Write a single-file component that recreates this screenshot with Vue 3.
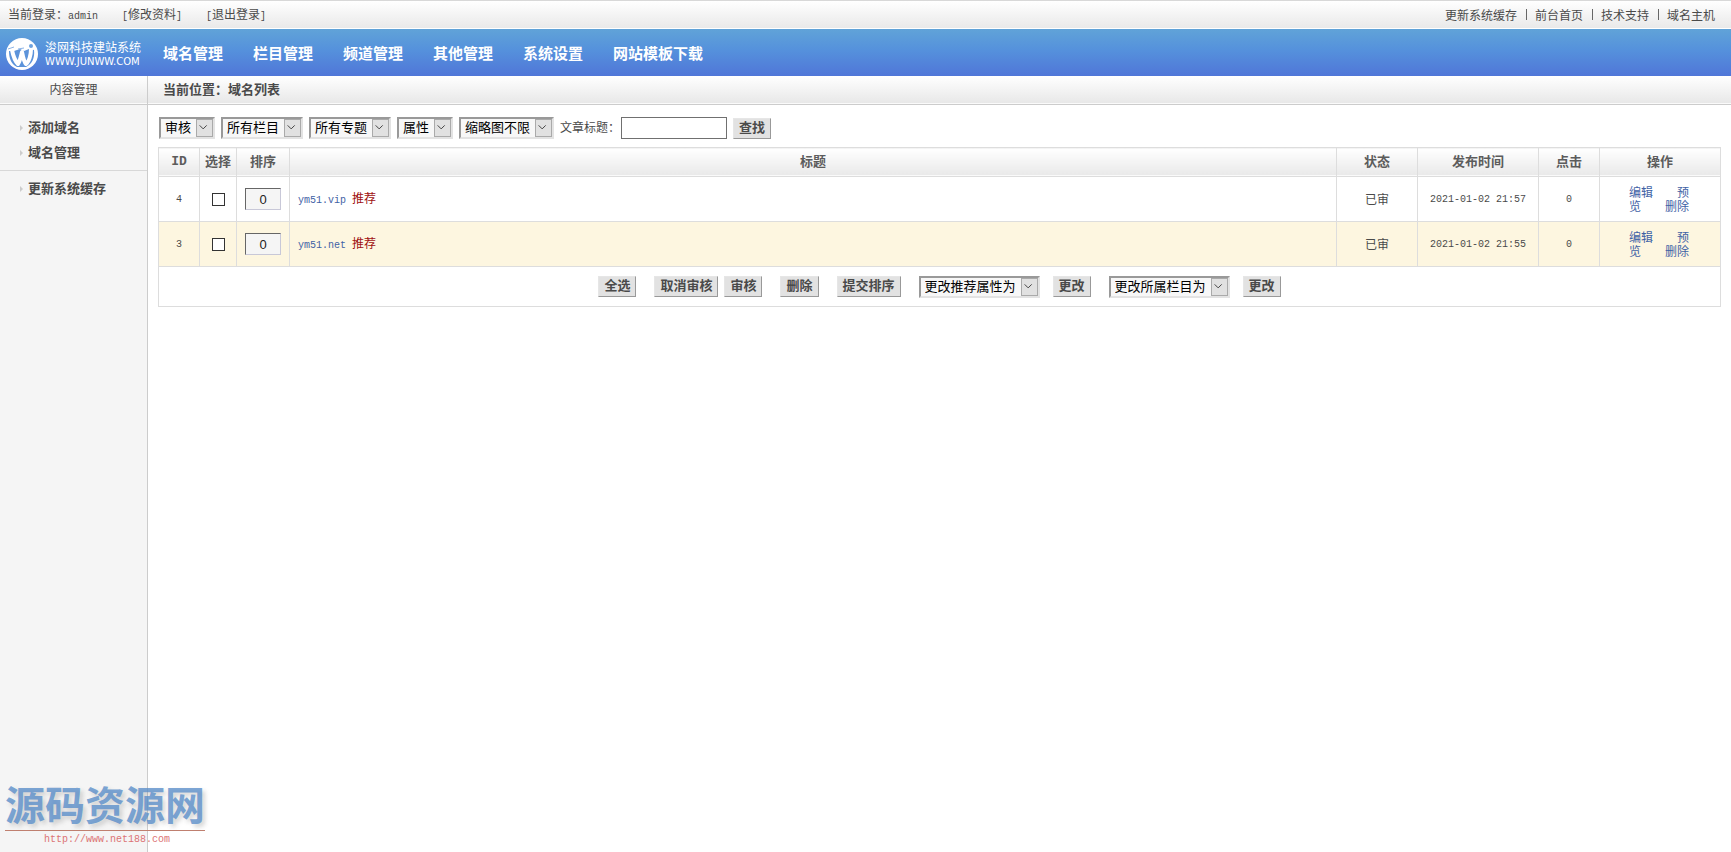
<script setup>
import { ref } from 'vue'

const navItems = ['域名管理', '栏目管理', '频道管理', '其他管理', '系统设置', '网站模板下载']
const quickLinks = ['更新系统缓存', '前台首页', '技术支持', '域名主机']
const filters = ['审核', '所有栏目', '所有专题', '属性', '缩略图不限']
const keyword = ref('')
const rows = ref([
  { id: 4, checked: false, order: '0', title: 'ym51.vip', time: '2021-01-02 21:57', hits: 0 },
  { id: 3, checked: false, order: '0', title: 'ym51.net', time: '2021-01-02 21:55', hits: 0 },
])
const selectAll = () => rows.value.forEach((row) => (row.checked = true))
</script>

<template>
  <div class="page">
    <header>
      <div class="topbar">
        <div class="account">
          <span>当前登录：<span class="mono">admin</span></span>
          <a href="#"><span class="mono">[</span>修改资料<span class="mono">]</span></a>
          <a href="#"><span class="mono">[</span>退出登录<span class="mono">]</span></a>
        </div>
        <div class="quick">
          <a v-for="link in quickLinks" :key="link" href="#">{{ link }}</a>
        </div>
      </div>
      <div class="navbar">
        <a class="logo" href="#">
          <svg width="34" height="34" viewBox="0 0 34 34" aria-hidden="true">
            <circle cx="17" cy="17" r="16" fill="#fff" />
            <path d="M4 14 C4 21 6 27 12 30 L21 30 C27 27 30 21 29 13 L24 12 L19 14 L15 12 L9 14 Z" fill="#5c93da" />
            <path d="M7 13 C8 18 10 24 13 27 C15 24 16 19 17 15 C18 20 19 25 21 27 C24 25 26 18 26 12" fill="none" stroke="#fff" stroke-width="4" stroke-linejoin="round" />
            <circle cx="26" cy="9" r="2" fill="#6ea2de" />
            <path d="M3 12 L9 10 M13 12 L19 11" stroke="#8db4e6" stroke-width="1" />
          </svg>
          <span class="logo-text">
            <span>浚网科技建站系统</span>
            <span class="logo-url">WWW.JUNWW.COM</span>
          </span>
        </a>
        <nav>
          <a v-for="item in navItems" :key="item" href="#">{{ item }}</a>
        </nav>
      </div>
    </header>

    <div class="body">
      <aside>
        <div class="bar side-title">内容管理</div>
        <ul>
          <li><a href="#">添加域名</a></li>
          <li><a href="#">域名管理</a></li>
        </ul>
        <ul>
          <li><a href="#">更新系统缓存</a></li>
        </ul>
      </aside>

      <main>
        <div class="bar crumb">当前位置：域名列表</div>
        <div class="content">
          <form class="filters" @submit.prevent>
            <span v-for="name in filters" :key="name" class="drop">
              <select :aria-label="name"><option>{{ name }}</option></select>
              <svg width="17" height="18" viewBox="0 0 17 18" aria-hidden="true"><path d="M3 6 L7 10 L11 6" /></svg>
            </span>
            <label for="keyword">文章标题：</label>
            <input id="keyword" v-model="keyword" class="keyword" type="text" />
            <button class="btn" type="submit">查找</button>
          </form>

          <table>
            <colgroup>
              <col class="c-id" /><col class="c-pick" /><col class="c-order" /><col />
              <col class="c-state" /><col class="c-time" /><col class="c-hits" /><col class="c-act" />
            </colgroup>
            <thead>
              <tr>
                <th class="id">ID</th>
                <th>选择</th>
                <th>排序</th>
                <th>标题</th>
                <th>状态</th>
                <th>发布时间</th>
                <th>点击</th>
                <th>操作</th>
              </tr>
            </thead>
            <tbody>
              <tr v-for="row in rows" :key="row.id">
                <td class="text mono">{{ row.id }}</td>
                <td><input v-model="row.checked" class="pick" type="checkbox" :aria-label="'选择 ' + row.title" /></td>
                <td><input v-model="row.order" class="order" type="text" :aria-label="'排序 ' + row.title" /></td>
                <td class="text title"><a class="mono" href="#">{{ row.title }}</a><span class="tag">推荐</span></td>
                <td class="text">已审</td>
                <td class="text mono">{{ row.time }}</td>
                <td class="text mono">{{ row.hits }}</td>
                <td class="text"><div class="actions"><a href="#">编辑</a><span class="mono">&nbsp;&nbsp;&nbsp;&nbsp;</span><a href="#">预览</a><span class="mono">&nbsp;&nbsp;&nbsp;&nbsp;</span><a href="#">删除</a></div></td>
              </tr>
            </tbody>
            <tfoot>
              <tr>
                <td colspan="8">
                  <div class="batch">
                    <button class="btn" type="button" @click="selectAll">全选</button>
                    <div class="pair">
                      <button class="btn" type="button">取消审核</button>
                      <button class="btn" type="button">审核</button>
                    </div>
                    <button class="btn" type="button">删除</button>
                    <button class="btn" type="button">提交排序</button>
                    <div v-for="name in ['更改推荐属性为', '更改所属栏目为']" :key="name" class="change">
                      <span class="drop">
                        <select :aria-label="name"><option>{{ name }}</option></select>
                        <svg width="17" height="18" viewBox="0 0 17 18" aria-hidden="true"><path d="M3 6 L7 10 L11 6" /></svg>
                      </span>
                      <button class="btn" type="button">更改</button>
                    </div>
                  </div>
                </td>
              </tr>
            </tfoot>
          </table>
        </div>
      </main>
    </div>

    <div class="watermark">
      <div class="mark-name">源码资源网</div>
      <div class="mark-url mono">http://www.net188.com</div>
    </div>
  </div>
</template>

<style>
body {
  background: #fff;
}
</style>

<style scoped>
.page {
  position: relative;
  display: flex;
  flex-direction: column;
  min-height: 100vh;
  color: #4a4a4a;
  font: 12px/14px "Liberation Sans", "Noto Sans CJK SC", sans-serif;
}
.page * {
  box-sizing: border-box;
}
a {
  color: inherit;
  text-decoration: none;
}
.mono {
  font-family: "Liberation Mono", "Noto Sans CJK SC", monospace;
  font-size: 10px;
}
.topbar {
  display: flex;
  justify-content: space-between;
  align-items: center;
  height: 29px;
  padding: 2px 16px 0 8px;
  border-top: 1px solid #d8d8d8;
  border-bottom: 1px solid #fff;
  background: linear-gradient(#fff, #e9e9e9);
}
.account {
  display: flex;
  gap: 24px;
}
.quick {
  display: flex;
}
.quick a + a::before {
  content: "";
  display: inline-block;
  width: 1px;
  height: 11px;
  margin: 0 8px 0 9px;
  background: #666;
}
.navbar {
  display: flex;
  align-items: center;
  height: 47px;
  padding-top: 2px;
  background: linear-gradient(#60a3d8, #5591dc 45%, #5076d8);
}
.logo {
  display: flex;
  align-items: center;
  gap: 6px;
  width: 163px;
  padding-left: 5px;
  color: #fff;
}
.logo-text {
  display: flex;
  flex-direction: column;
  padding-top: 3px;
}
.logo-url {
  font: 10px/14px "DejaVu Sans", sans-serif;
}
nav {
  display: flex;
  gap: 30px;
  color: #fff;
  font-size: 15px;
  line-height: 20px;
  font-weight: bold;
}
.body {
  flex: 1;
  display: flex;
}
aside {
  width: 148px;
  border-right: 1px solid #ccc;
  background: #f5f5f5;
}
main {
  flex: 1;
  min-width: 0;
}
.bar {
  height: 29px;
  line-height: 28px;
  border-bottom: 1px solid #ccc;
  background: linear-gradient(#fff, #e7e7e7);
  box-shadow: inset 0 -1px #fafafa;
}
.side-title {
  text-align: center;
}
.crumb {
  padding-left: 15px;
  font-size: 13px;
  font-weight: bold;
}
ul {
  margin: 0;
  padding: 10px 0 5px;
  list-style: none;
  font-size: 13px;
  line-height: 25px;
  font-weight: bold;
}
ul + ul {
  padding-top: 5px;
  border-top: 1px solid #d8d8d8;
}
li {
  display: flex;
  align-items: center;
  gap: 5px;
  padding-left: 20px;
}
li::before {
  content: "";
  border: 3px solid transparent;
  border-left-color: #ccc;
  border-right-width: 0;
}
.content {
  padding: 11px 10px;
}
.filters {
  display: flex;
  align-items: center;
  gap: 6px;
  height: 24px;
  margin-bottom: 7px;
  padding-left: 1px;
}
.drop {
  position: relative;
  display: inline-flex;
}
.drop select {
  appearance: none;
  height: 22px;
  margin: 0;
  padding: 0 21px 0 4px;
  border: 2px solid;
  border-color: #999 #e3e3e3 #e3e3e3 #999;
  border-radius: 0;
  background: #f7f7f7;
  color: #000;
  font: 13px/16px "Liberation Sans", "Noto Sans CJK SC", sans-serif;
}
.drop svg {
  position: absolute;
  top: 2px;
  right: 2px;
  border: 1px solid #aaa;
  background: #e1e1e1;
  pointer-events: none;
}
.drop path {
  fill: none;
  stroke: #444;
  vector-effect: non-scaling-stroke;
}
.keyword {
  width: 106px;
  height: 22px;
  margin: 0 0 0 -5px;
  border: 1px solid #707070;
  font-size: 13px;
}
.btn {
  height: 21px;
  margin: 0;
  padding: 0 5px 1px;
  border: 1px solid;
  border-color: #e6e6e6 #999 #999 #e6e6e6;
  border-radius: 0;
  background: #e2e2e2;
  color: #4a4a4a;
  font: bold 13px/16px "Liberation Sans", "Noto Sans CJK SC", sans-serif;
}
table {
  width: 100%;
  table-layout: fixed;
  border-collapse: collapse;
  text-align: center;
}
.c-id { width: 41px; }
.c-pick { width: 37px; }
.c-order { width: 53px; }
.c-state { width: 81px; }
.c-time { width: 121px; }
.c-hits { width: 61px; }
.c-act { width: 121px; }
th,
td {
  padding: 0;
  border: 1px solid #ddd;
}
th {
  height: 29px;
  background: linear-gradient(#fff, #e8e8e8);
  box-shadow: inset 0 -1px #fafafa;
  color: #5c5c5c;
  font-size: 13px;
}
th.id {
  font-family: "Liberation Mono", monospace;
}
tbody td {
  height: 45px;
}
tbody td.text {
  padding-top: 2px;
}
tbody tr:nth-child(even) {
  background: #fdf6e0;
}
.pick {
  appearance: none;
  display: block;
  width: 13px;
  height: 13px;
  margin: 0 auto;
  border: 1px solid #333;
  background: #fff;
}
.pick:checked {
  box-shadow: inset 0 0 0 2px #fff;
  background: #333;
}
.order {
  display: block;
  width: 36px;
  height: 22px;
  margin: 0 auto;
  padding: 0;
  border: 1px solid;
  border-color: #666 #c8c8d8 #c8c8d8 #666;
  background: #f5f5f5;
  color: #222;
  font: 13px "Liberation Sans", sans-serif;
  text-align: center;
}
td.title {
  padding-left: 8px;
  text-align: left;
}
.title a,
.actions {
  color: #3f62a5;
}
.tag {
  margin-left: 6px;
  color: #a01010;
}
.actions {
  width: 62px;
  margin: 0 auto;
  text-align: left;
}
.actions .mono {
  line-height: 10px;
}
tfoot td {
  height: 40px;
}
.batch {
  display: flex;
  justify-content: center;
  align-items: center;
  gap: 18px;
}
.pair {
  display: flex;
  gap: 6px;
}
.change {
  display: flex;
  align-items: center;
  gap: 13px;
}
.watermark {
  position: absolute;
  left: 5px;
  bottom: 4px;
  width: 200px;
  text-align: center;
  pointer-events: none;
}
.mark-name {
  border-bottom: 1px solid #c08070;
  color: rgba(90, 142, 202, 0.8);
  font-size: 40px;
  line-height: 48px;
  font-weight: bold;
  text-shadow: 3px 3px 4px rgba(120, 120, 120, 0.3);
}
.mark-url {
  padding-left: 4px;
  color: #dc7474;
  line-height: 17px;
}
</style>
